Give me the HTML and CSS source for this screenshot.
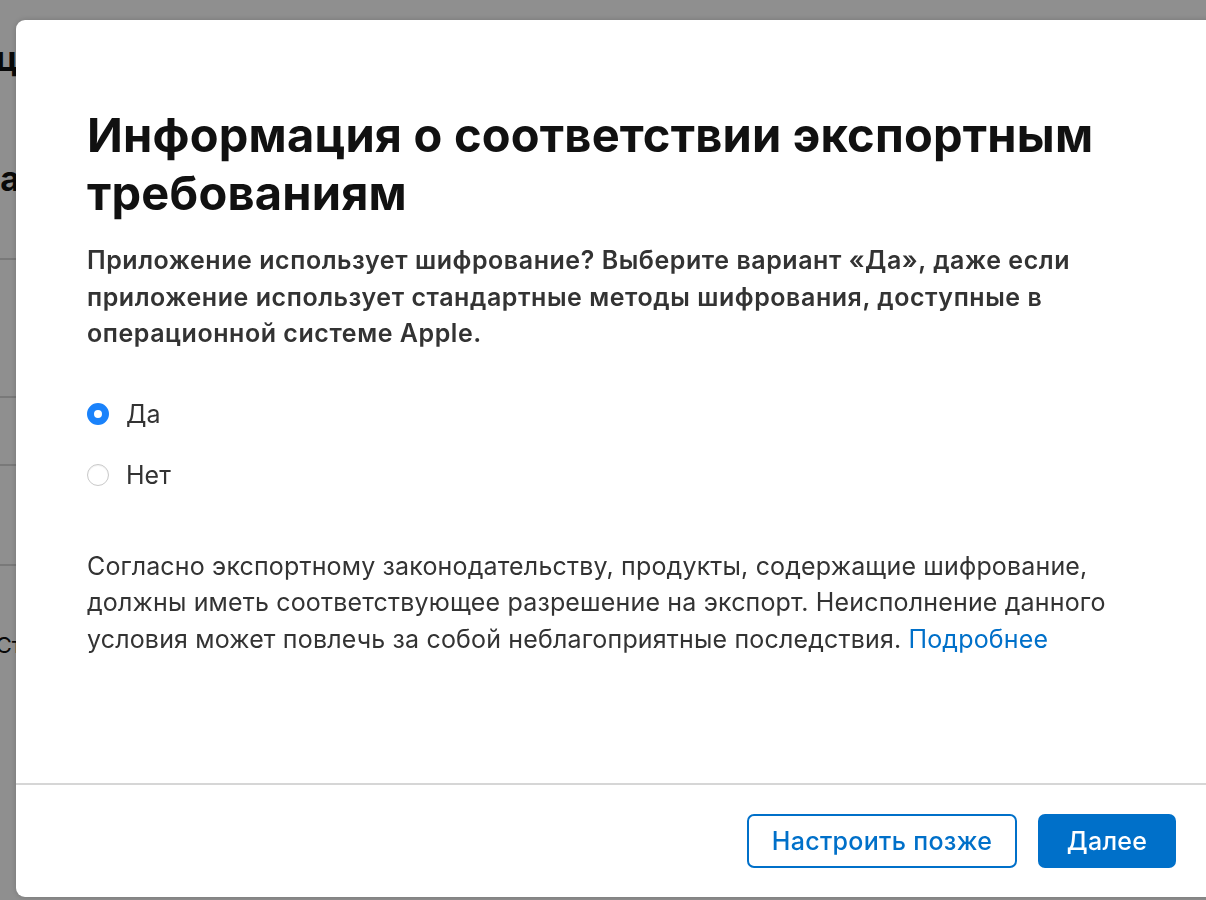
FILE: index.html
```html
<!DOCTYPE html>
<html lang="ru">
<head>
<meta charset="utf-8">
<title>Информация о соответствии экспортным требованиям</title>
<link rel="stylesheet" href="styles.css">
</head>
<body>
<div class="page">
  <div class="page-col">
    <div class="page-title"><span>Информац</span></div>
    <div class="page-sub"><span>Обзорна</span></div>
    <div class="page-row page-row-a"></div>
    <div class="page-row page-row-b"></div>
    <div class="page-row page-row-c"></div>
    <div class="page-row page-row-d"></div>
    <div class="page-text"><span>Ст</span></div>
  </div>
</div>
<div class="overlay">
  <div class="modal" role="dialog">
    <div class="modal-body">
      <h1 class="title">Информация о соответствии экспортным требованиям</h1>
      <p class="question">Приложение использует шифрование? Выберите вариант «Да», даже если приложение использует стандартные методы шифрования, доступные в операционной системе Apple.</p>
      <div class="options">
        <label class="option"><span class="radio radio-on"></span><span class="option-label">Да</span></label>
        <label class="option"><span class="radio"></span><span class="option-label">Нет</span></label>
      </div>
      <p class="note">Согласно экспортному законодательству, продукты, содержащие шифрование, должны иметь соответствующее разрешение на экспорт. Неисполнение данного условия может повлечь за собой неблагоприятные последствия. <a class="link" href="#">Подробнее</a></p>
    </div>
    <div class="modal-footer">
      <button class="btn btn-secondary">Настроить позже</button>
      <button class="btn btn-primary">Далее</button>
    </div>
  </div>
</div>
</body>
</html>
```
FILE: styles.css
```css
html, body {
  margin: 0;
  padding: 0;
  height: 100%;
  overflow: hidden;
}
body {
  background: #ffffff;
  font-family: Inter, "Noto Sans", "Liberation Sans", sans-serif;
  color: #333333;
}
.page {
  padding-top: 38px;
}
.page-col {
  width: 16px;
  display: flex;
  flex-direction: column;
}
.page-title, .page-sub, .page-text {
  display: flex;
  justify-content: flex-end;
  overflow: hidden;
  white-space: nowrap;
  color: #111;
}
.page-title {
  font-size: 34px;
  font-weight: 700;
  height: 44px;
  margin-right: -2px;
}
.page-sub {
  font-size: 34px;
  font-weight: 700;
  height: 44px;
  margin-top: 76px;
  margin-right: -4px;
}
.page-row {
  border-top: 2px solid #d8d8d8;
}
.page-row-a { margin-top: 56px; height: 136px; }
.page-row-b { height: 66px; }
.page-row-c { height: 98px; }
.page-row-d { height: 66px; }
.page-text {
  font-size: 22px;
  height: 30px;
  margin-right: -6px;
}

.overlay {
  position: fixed;
  inset: 0;
  background: rgba(0, 0, 0, 0.44);
}
.modal {
  position: absolute;
  left: 16px;
  top: 20px;
  width: 1210px;
  height: 877px;
  background: #ffffff;
  border-radius: 9px;
  box-shadow: 0 0 6px rgba(0, 0, 0, 0.18);
  display: flex;
  flex-direction: column;
  overflow: hidden;
}
.modal-body {
  flex: 1;
  padding: 86px 40px 0 71px;
}
.title {
  margin: 0;
  font-size: 47px;
  font-weight: 700;
  line-height: 58px;
  color: #111111;
  letter-spacing: 0.2px;
  max-width: 1060px;
}
.question {
  margin: 20px 0 0;
  font-size: 25px;
  font-weight: 600;
  line-height: 36.5px;
  letter-spacing: 0.55px;
  color: #333333;
  max-width: 1010px;
}
.options {
  margin-top: 44px;
  display: flex;
  flex-direction: column;
  gap: 25px;
}
.option {
  display: flex;
  align-items: center;
  gap: 17px;
  height: 36px;
}
.radio {
  width: 22px;
  height: 22px;
  border-radius: 50%;
  box-sizing: border-box;
  border: 1px solid #c9c9c9;
  background: #ffffff;
  box-shadow: inset 0 1px 1px rgba(0,0,0,0.06);
}
.radio-on {
  border: 7px solid #1a82fb;
  box-shadow: none;
}
.option-label {
  font-size: 25px;
  color: #333333;
}
.note {
  margin: 55px 0 0;
  font-size: 25px;
  line-height: 36.5px;
  letter-spacing: 0.16px;
  color: #333333;
  max-width: 1030px;
}
.link {
  color: #0070c9;
  text-decoration: none;
}
.modal-footer {
  border-top: 2px solid #d6d6d6;
  padding: 29px 50px 29px 0;
  display: flex;
  justify-content: flex-end;
  gap: 21px;
}
.btn {
  font-family: inherit;
  font-size: 25px;
  font-weight: 500;
  letter-spacing: 0.3px;
  height: 54px;
  border-radius: 7px;
  cursor: pointer;
  box-sizing: border-box;
}
.btn-secondary {
  background: #ffffff;
  color: #0070c9;
  border: 2px solid #0070c9;
  width: 270px;
}
.btn-primary {
  background: #0070c9;
  color: #ffffff;
  border: none;
  width: 138px;
}
```
